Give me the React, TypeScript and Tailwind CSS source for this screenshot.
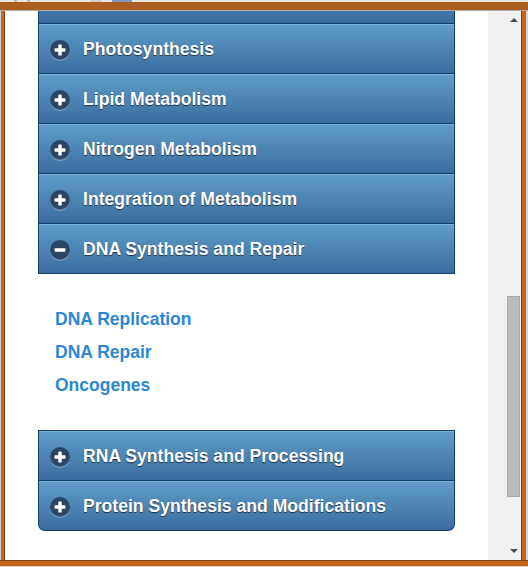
import React from "react";

const Icon = ({ open }: { open?: boolean }) => (
  <span className="w-[20px] h-[20px] rounded-full bg-[#2a4667] shadow-[0_1px_0_rgba(170,200,230,0.6),inset_0_-1px_1px_rgba(255,255,255,0.15)] flex items-center justify-center shrink-0">
    <svg width="12" height="12" viewBox="0 0 12 12">
      <rect x="0.5" y="4.3" width="11" height="3.4" rx="0.6" fill="#fff" />
      {!open && <rect x="4.3" y="0.5" width="3.4" height="11" rx="0.6" fill="#fff" />}
    </svg>
  </span>
);

const Header = ({
  title,
  open,
  extra = "h-[50px]",
}: {
  title: string;
  open?: boolean;
  extra?: string;
}) => (
  <div
    className={`flex items-center gap-[13px] pl-[11px] pt-[2px] border-x border-b border-[#0e4266] bg-gradient-to-b from-[#619ec8] to-[#3b6c9d] shadow-[inset_0_1px_0_#7cb2d8] ${extra}`}
  >
    <Icon open={open} />
    <span className="text-white font-bold text-[17.6px] [text-shadow:0_1px_1px_rgba(0,0,0,0.6)] whitespace-nowrap">
      {title}
    </span>
  </div>
);

export default function App() {
  return (
    <div
      className="w-[528px] h-[567px] flex flex-col bg-[#ad5e21] overflow-hidden"
      style={{ fontFamily: '"Liberation Sans", Arial, sans-serif' }}
    >
      {/* top frame */}
      <div className="h-[11px] shrink-0 flex flex-col">
        <div className="h-[2px] bg-[#ece6df] flex gap-[10px] pl-[14px]">
          <span className="w-[3px] h-[2px] bg-[#c9b9a8]" />
          <span className="w-[3px] h-[2px] bg-[#c9b9a8]" />
          <span className="w-[12px] h-[2px] bg-[#d9cbbd] ml-[50px]" />
          <span className="w-[20px] h-[2px] bg-[#7f98bc]" />
        </div>
        <div className="flex-1 bg-[#ab5d22]" />
        <div className="h-[1px] bg-[#b5aaa0]" />
      </div>

      {/* middle */}
      <div className="flex-1 flex min-h-0">
        <div className="w-[5px] flex shrink-0">
          <div className="w-[1px] bg-[#cfcfcf]" />
          <div className="w-[3px] bg-[#c8651b]" />
          <div className="w-[1px] bg-[#7d4318]" />
        </div>

        <div className="flex-1 bg-white overflow-hidden min-w-0">
          <div className="ml-[33px] w-[417px] flex flex-col -mt-[37px]">
            <Header title="Carbohydrate Metabolism" />
            <Header title="Photosynthesis" />
            <Header title="Lipid Metabolism" />
            <Header title="Nitrogen Metabolism" />
            <Header title="Integration of Metabolism" />
            <Header
              title="DNA Synthesis and Repair"
              open
              extra="h-[50px] relative z-10 shadow-[inset_0_1px_0_#7cb2d8,0_2px_10px_rgba(60,130,220,0.55)]"
            />
            <div className="pt-[29px] pb-[28px] pl-[17px] flex flex-col">
              {["DNA Replication", "DNA Repair", "Oncogenes"].map((t) => (
                <span
                  key={t}
                  className="text-[#2b87d1] font-bold text-[17.5px] leading-[33px]"
                >
                  {t}
                </span>
              ))}
            </div>
            <Header title="RNA Synthesis and Processing" extra="h-[51px] border-t" />
            <Header
              title="Protein Synthesis and Modifications"
              extra="h-[50px] rounded-b-[7px]"
            />
          </div>
        </div>

        {/* scrollbar */}
        <div className="w-[33px] bg-[#f0f0f0] flex justify-end shrink-0">
          <div className="w-[15px] flex flex-col items-center pt-[7px] pb-[7px]">
            <svg width="8" height="4" viewBox="0 0 8 4">
              <polygon points="0,4 8,4 4,0" fill="#505050" />
            </svg>
            <div className="mt-[274px] w-[13px] h-[201px] bg-[#bcbcbc] border border-[#a9a9a9]" />
            <div className="flex-1" />
            <svg width="8" height="4" viewBox="0 0 8 4">
              <polygon points="0,0 8,0 4,4" fill="#505050" />
            </svg>
          </div>
        </div>

        <div className="w-[7px] flex shrink-0">
          <div className="w-[1px] bg-[#7d4318]" />
          <div className="w-[4px] bg-[#c8651b]" />
          <div className="w-[2px] bg-[#d6d6d6]" />
        </div>
      </div>

      {/* bottom frame */}
      <div className="h-[7px] shrink-0 flex flex-col">
        <div className="h-[1px] bg-[#7d4318]" />
        <div className="flex-1 bg-[#c8651b]" />
        <div className="h-[1px] bg-[#d0d0d0]" />
      </div>
    </div>
  );
}
